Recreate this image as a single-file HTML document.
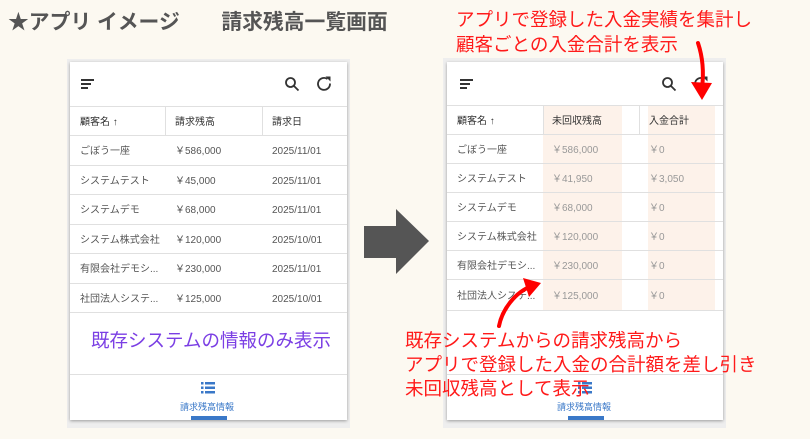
<!DOCTYPE html>
<html><head><meta charset="utf-8"><style>
*{margin:0;padding:0;box-sizing:border-box}
body{width:810px;height:439px;background:#fcf9f1;position:relative;overflow:hidden;font-family:"Liberation Sans","Noto Sans CJK JP",sans-serif;}
.abs{position:absolute}
.frame{position:absolute;background:#eeeeee}
.card{position:absolute;background:#fff;box-shadow:0 1px 3px rgba(0,0,0,.35);overflow:hidden}
.row{position:absolute;left:0;right:0;border-bottom:1px solid #e0e0e0;font-size:10px;color:#555}
.row span{position:absolute;top:50%;margin-top:-5px;line-height:14px;height:14px;white-space:nowrap}
.hd{font-size:10px;color:#333}
.red{position:absolute;color:#ff1a1a;font-size:18.5px;line-height:24px;white-space:nowrap}
</style></head><body>
<div class="abs" style="left:8px;top:5px;font-size:20.8px;font-weight:bold;color:#555;white-space:nowrap">★アプリ イメージ　　請求残高一覧画面</div>

<!-- left -->
<div class="frame" style="left:67px;top:59px;width:283px;height:369px"></div>
<div class="card" style="left:70px;top:62px;width:277px;height:358px">
 <svg class="abs" style="left:10px;top:16px" width="16" height="12"><path d="M1 2h13M1 6h10M1 10h7" stroke="#333" stroke-width="2"/></svg>
 <svg class="abs" style="left:214px;top:14px" width="16" height="16"><circle cx="6.5" cy="6.5" r="4.5" fill="none" stroke="#333" stroke-width="1.8"/><path d="M10 10l4.5 4.5" stroke="#333" stroke-width="1.8"/></svg>
 <svg class="abs" style="left:246px;top:13px" width="18" height="18"><path d="M14 8.5A6 6 0 1 1 11.5 4" fill="none" stroke="#333" stroke-width="1.8"/><path d="M9.5 1.5h5v5z" fill="#333"/></svg>
 <div class="row" style="top:44px;height:30px;border-top:1px solid #e0e0e0"><span class="hd" style="left:10px">顧客名 ↑</span><span class="hd" style="left:105px">請求残高</span><span class="hd" style="left:202px">請求日</span>
  <div class="abs" style="left:95px;top:0;height:29px;border-left:1px solid #e0e0e0"></div><div class="abs" style="left:192px;top:0;height:29px;border-left:1px solid #e0e0e0"></div></div>
 <div class="row" style="top:74px;height:29.5px"><span style="left:10px">ごぼう一座</span><span style="left:105px">￥586,000</span><span style="left:202px">2025/11/01</span></div>
 <div class="row" style="top:103.5px;height:29.5px"><span style="left:10px">システムテスト</span><span style="left:105px">￥45,000</span><span style="left:202px">2025/11/01</span></div>
 <div class="row" style="top:133px;height:29.5px"><span style="left:10px">システムデモ</span><span style="left:105px">￥68,000</span><span style="left:202px">2025/11/01</span></div>
 <div class="row" style="top:162.5px;height:29.5px"><span style="left:10px">システム株式会社</span><span style="left:105px">￥120,000</span><span style="left:202px">2025/10/01</span></div>
 <div class="row" style="top:192px;height:29.5px"><span style="left:10px">有限会社デモシ...</span><span style="left:105px">￥230,000</span><span style="left:202px">2025/11/01</span></div>
 <div class="row" style="top:221.5px;height:29.5px"><span style="left:10px">社団法人システ...</span><span style="left:105px">￥125,000</span><span style="left:202px">2025/10/01</span></div>
 <div class="abs" style="left:21px;top:265px;font-size:18.5px;color:#7b3fe4;white-space:nowrap">既存システムの情報のみ表示</div>
 <div class="abs" style="left:0;right:0;top:312px;border-top:1px solid #e0e0e0"></div>
 <svg class="abs" style="left:131px;top:320px" width="15" height="12"><g fill="#3a78c8"><rect x="0" y="0" width="2.5" height="2.5"/><rect x="0" y="4.5" width="2.5" height="2.5"/><rect x="0" y="9" width="2.5" height="2.5"/><rect x="4" y="0" width="10" height="2.5"/><rect x="4" y="4.5" width="10" height="2.5"/><rect x="4" y="9" width="10" height="2.5"/></g></svg>
 <div class="abs" style="left:110px;top:338px;font-size:9px;color:#3a78c8;white-space:nowrap">請求残高情報</div>
 <div class="abs" style="left:121px;top:354px;width:36px;height:4px;background:#3a78c8"></div>
</div>

<!-- arrow -->
<svg class="abs" style="left:362px;top:207px" width="70" height="70"><path d="M2 19h32V2l33 32-33 33V51H2z" fill="#555"/></svg>

<!-- right -->
<div class="frame" style="left:443px;top:58px;width:283px;height:370px"></div>
<div class="card" style="left:447px;top:62px;width:276px;height:358px">
 <div class="abs" style="left:96px;top:43px;width:79px;height:206px;background:#fdf2ea"></div>
 <div class="abs" style="left:201px;top:43px;width:67px;height:206px;background:#fdf2ea"></div>
 <svg class="abs" style="left:12px;top:16px" width="16" height="12"><path d="M1 2h13M1 6h10M1 10h7" stroke="#333" stroke-width="2"/></svg>
 <svg class="abs" style="left:214px;top:14px" width="16" height="16"><circle cx="6.5" cy="6.5" r="4.5" fill="none" stroke="#333" stroke-width="1.8"/><path d="M10 10l4.5 4.5" stroke="#333" stroke-width="1.8"/></svg>
 <svg class="abs" style="left:246px;top:13px" width="18" height="18"><path d="M14 8.5A6 6 0 1 1 11.5 4" fill="none" stroke="#333" stroke-width="1.8"/><path d="M9.5 1.5h5v5z" fill="#333"/></svg>
 <div class="row" style="top:43px;height:30px;border-top:1px solid #e0e0e0"><span class="hd" style="left:10px">顧客名 ↑</span><span class="hd" style="left:105px">未回収残高</span><span class="hd" style="left:202px">入金合計</span>
  <div class="abs" style="left:96px;top:0;height:29px;border-left:1px solid #e0e0e0"></div><div class="abs" style="left:192px;top:0;height:29px;border-left:1px solid #e0e0e0"></div></div>
 <div class="row" style="top:73px;height:29px"><span style="left:10px">ごぼう一座</span><span style="left:105px;color:#999">￥586,000</span><span style="left:202px;color:#999">￥0</span></div>
 <div class="row" style="top:102px;height:29px"><span style="left:10px">システムテスト</span><span style="left:105px;color:#999">￥41,950</span><span style="left:202px;color:#999">￥3,050</span></div>
 <div class="row" style="top:131px;height:29px"><span style="left:10px">システムデモ</span><span style="left:105px;color:#999">￥68,000</span><span style="left:202px;color:#999">￥0</span></div>
 <div class="row" style="top:160px;height:29px"><span style="left:10px">システム株式会社</span><span style="left:105px;color:#999">￥120,000</span><span style="left:202px;color:#999">￥0</span></div>
 <div class="row" style="top:189px;height:29px"><span style="left:10px">有限会社デモシ...</span><span style="left:105px;color:#999">￥230,000</span><span style="left:202px;color:#999">￥0</span></div>
 <div class="row" style="top:218px;height:31px"><span style="left:10px">社団法人システ...</span><span style="left:105px;color:#999">￥125,000</span><span style="left:202px;color:#999">￥0</span></div>
 <div class="abs" style="left:0;right:0;top:312px;border-top:1px solid #e0e0e0"></div>
 <svg class="abs" style="left:131px;top:320px" width="15" height="12"><g fill="#3a78c8"><rect x="0" y="0" width="2.5" height="2.5"/><rect x="0" y="4.5" width="2.5" height="2.5"/><rect x="0" y="9" width="2.5" height="2.5"/><rect x="4" y="0" width="10" height="2.5"/><rect x="4" y="4.5" width="10" height="2.5"/><rect x="4" y="9" width="10" height="2.5"/></g></svg>
 <div class="abs" style="left:110px;top:338px;font-size:9px;color:#3a78c8;white-space:nowrap">請求残高情報</div>
 <div class="abs" style="left:121px;top:354px;width:36px;height:4px;background:#3a78c8"></div>
</div>

<div class="red" style="left:456px;top:8px">アプリで登録した入金実績を集計し</div>
<div class="red" style="left:456px;top:33px">顧客ごとの入金合計を表示</div>
<svg class="abs" style="left:690px;top:40px" width="30" height="65"><path d="M8 3C13 18 14 32 12 48" fill="none" stroke="#f00" stroke-width="4" stroke-linecap="round"/><path d="M1 42l11 18 10-17z" fill="#f00"/></svg>
<svg class="abs" style="left:490px;top:270px" width="60" height="60"><path d="M9 56C12 40 25 22 42 16" fill="none" stroke="#f00" stroke-width="4" stroke-linecap="round"/><path d="M33 8l18 5-12 14z" fill="#f00"/></svg>
<div class="red" style="left:405px;top:329px">既存システムからの請求残高から</div>
<div class="red" style="left:405px;top:353px">アプリで登録した入金の合計額を差し引き</div>
<div class="red" style="left:405px;top:377px">未回収残高として表示</div>
</body></html>
